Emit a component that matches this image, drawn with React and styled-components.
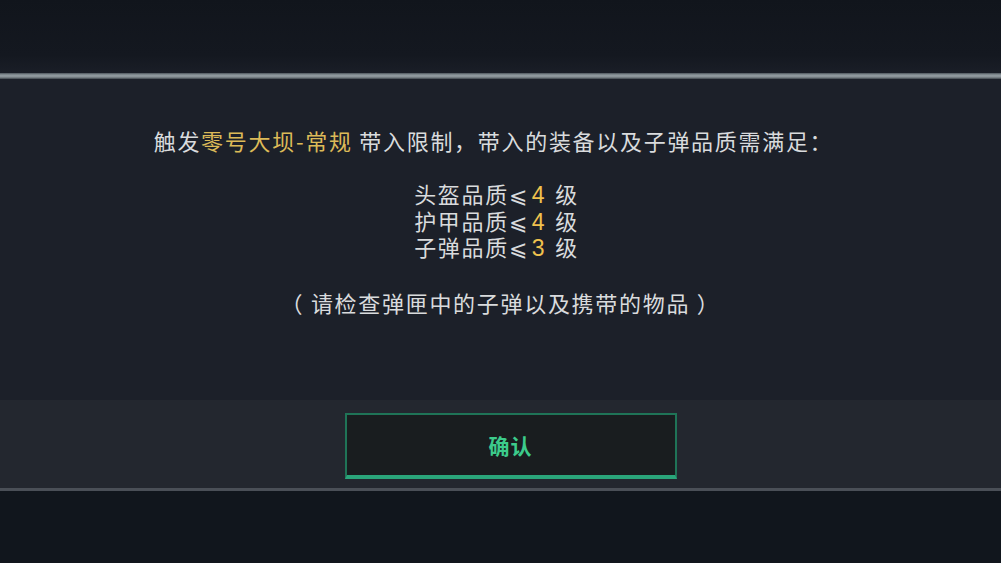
import React from 'react';
import styled, { createGlobalStyle } from 'styled-components';

const GlobalStyle = createGlobalStyle`
  html, body {
    margin: 0;
    padding: 0;
    background: #12161d;
    font-family: "Noto Sans CJK SC", "Noto Sans", sans-serif;
  }
`;

const Screen = styled.div`
  width: 1001px;
  height: 563px;
  display: flex;
  flex-direction: column;
  overflow: hidden;
  background: linear-gradient(180deg, #12161e 0%, #161a22 100%);
`;

const TopShade = styled.div`
  height: 73px;
  background: linear-gradient(180deg, #11151c 0%, #141820 75%, #1a1e27 100%);
`;

const TopRule = styled.div`
  height: 6px;
  background: linear-gradient(180deg, #4d555c 0%, #909a9f 35%, #8a9398 65%, #3e454c 100%);
`;

const Panel = styled.div`
  display: flex;
  flex-direction: column;
  background: #1c2029;
`;

const Body = styled.div`
  height: 321px;
  box-sizing: border-box;
  padding-top: 46px;
  display: flex;
  flex-direction: column;
  align-items: center;
  color: #d9dbdd;
  font-size: 22px;
  letter-spacing: 1.7px;
`;

const Lead = styled.div`
  line-height: 30px;
  white-space: nowrap;
  margin-right: 14px;
`;

const Gold = styled.span`
  color: ${p => (p.$num ? '#f0c24e' : '#dcba58')};
  ${p => p.$num && 'font-family: "Liberation Sans", sans-serif; font-size: 23px; line-height: 1; margin: 0 9px 0 3px;'}
`;

const Limits = styled.div`
  margin: 25px 8px 0 0;
  display: flex;
  flex-direction: column;
  align-items: center;
`;

const LimitRow = styled.div`
  height: 26.5px;
  line-height: 26.5px;
  white-space: nowrap;
`;

const Note = styled.div`
  margin-top: 27px;
  line-height: 30px;
  white-space: nowrap;
`;

const Footer = styled.div`
  height: 88px;
  box-sizing: border-box;
  padding: 13px 0 0 20px;
  display: flex;
  justify-content: center;
  background: #23272f;
`;

const ConfirmButton = styled.button`
  width: 332px;
  height: 66px;
  box-sizing: border-box;
  background: #191d1f;
  border: 2px solid #1f7457;
  border-bottom: 4px solid #2aa57a;
  color: #3ccb8b;
  font-family: "Noto Sans CJK SC", sans-serif;
  font-size: 21px;
  font-weight: 700;
  letter-spacing: 1px;
  cursor: pointer;
`;

const BottomRule = styled.div`
  height: 3px;
  background: #4a4f57;
`;

const BottomShade = styled.div`
  flex: 1;
  background: #11161d;
`;

const limits = [
  { name: '头盔品质', level: 4 },
  { name: '护甲品质', level: 4 },
  { name: '子弹品质', level: 3 },
];

export default function App() {
  return (
    <>
      <GlobalStyle />
      <Screen>
        <TopShade />
        <TopRule />
        <Panel>
          <Body>
            <Lead>
              触发<Gold>零号大坝-常规</Gold> 带入限制，带入的装备以及子弹品质需满足：
            </Lead>
            <Limits>
              {limits.map(l => (
                <LimitRow key={l.name}>
                  {l.name}⩽<Gold $num>{l.level}</Gold>级
                </LimitRow>
              ))}
            </Limits>
            <Note>（ 请检查弹匣中的子弹以及携带的物品 ）</Note>
          </Body>
          <Footer>
            <ConfirmButton>确认</ConfirmButton>
          </Footer>
        </Panel>
        <BottomRule />
        <BottomShade />
      </Screen>
    </>
  );
}
